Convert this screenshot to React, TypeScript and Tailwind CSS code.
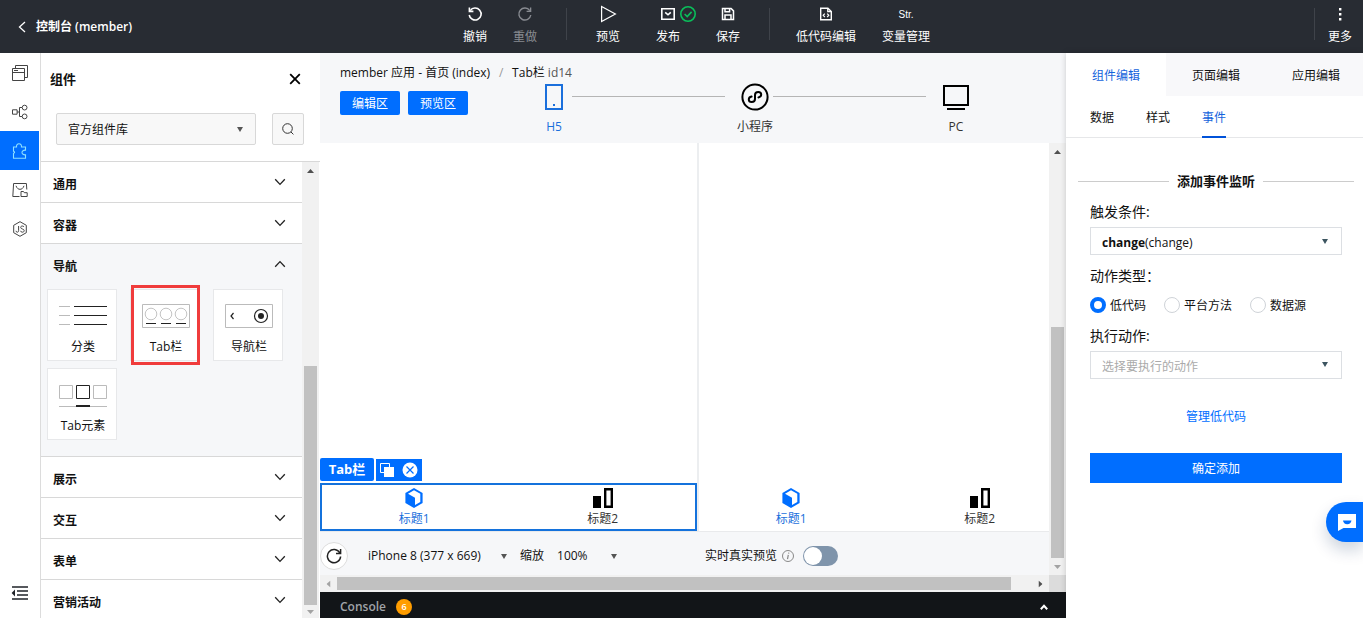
import React, { useState } from 'react';

type IconProps = { className?: string };

const UndoIcon = () => (
  <svg width="16" height="16" viewBox="0 0 16 16" fill="none" stroke="currentColor" strokeWidth="1.6">
    <path d="M3.2 4.6A6 6 0 1 1 2.2 9" />
    <path d="M2.4 1.4v4h4" />
  </svg>
);

const RedoIcon = () => (
  <svg width="16" height="16" viewBox="0 0 16 16" fill="none" stroke="currentColor" strokeWidth="1.4">
    <path d="M12.8 4.6A6 6 0 1 0 13.8 9" />
    <path d="M13.6 1.4v4h-4" />
  </svg>
);

const PlayIcon = () => (
  <svg width="18" height="18" viewBox="0 0 18 18" fill="none" stroke="currentColor" strokeWidth="1.2">
    <path d="M2.6 1.4v15.2L16.4 9z" />
  </svg>
);

const PublishIcon = () => (
  <svg width="16" height="16" viewBox="0 0 16 16" fill="none" stroke="currentColor" strokeWidth="1.6">
    <path d="M1.8 2.8h12.4v10.4H1.8z" />
    <path d="M5.2 6.4 8 8.8l2.8-2.4" />
  </svg>
);

const CheckBadge = () => (
  <svg width="16" height="16" viewBox="0 0 16 16" fill="none" stroke="#0abf5b" strokeWidth="1.6">
    <circle cx="8" cy="8" r="7.2" />
    <path d="m4.6 8 2.6 2.5 4.4-4.6" />
  </svg>
);

const SaveIcon = () => (
  <svg width="14" height="14" viewBox="0 0 14 14" fill="none" stroke="currentColor" strokeWidth="1.5">
    <path d="M1.5 1.5h8.6l2.4 2.4v8.6h-11z" />
    <path d="M4 1.8v3h4.6v-3M4 12.4V8h6v4.4" />
  </svg>
);

const CodeFileIcon = () => (
  <svg width="14" height="14" viewBox="0 0 14 14" fill="none" stroke="currentColor" strokeWidth="1.4">
    <path d="M1.7 1.2h7.2l3.4 3.4v8.2H1.7z" />
    <path d="M8.8 1.4v3.2h3.4" />
    <path d="M5.8 6.6 4.2 8.3l1.6 1.7M8.2 6.6l1.6 1.7L8.2 10" strokeWidth="1.2" />
  </svg>
);

const DotsIcon = () => (
  <svg width="14" height="14" viewBox="0 0 14 14" fill="currentColor">
    <path d="M6 1h2.4v2.4H6zM6 6h2.4v2.4H6zM6 11h2.4v2.4H6z" />
  </svg>
);

const PagesIcon = () => (
  <svg width="16" height="16" viewBox="0 0 16 16" fill="none" stroke="currentColor" strokeWidth="1">
    <path d="M.5 3.5h12v12H.5zM.5 7.5h12" />
    <path d="M2 5.5h4" />
    <path d="M3.5 3.5v-3h12v12h-3" />
  </svg>
);

const FlowIcon = () => (
  <svg width="16" height="16" viewBox="0 0 16 16" fill="none" stroke="currentColor" strokeWidth="1">
    <path d="M.5 5.8h4.6v4.4H.5zM5 8h2.5M10 3.5H7.5v9H10" />
    <circle cx="12.6" cy="3.6" r="2.4" />
    <circle cx="12.6" cy="12.4" r="2.4" />
  </svg>
);

const PuzzleIcon = () => (
  <svg width="16" height="16" viewBox="0 0 16 16" fill="none" stroke="currentColor" strokeWidth="1.1">
    <path d="M1.500 4h3c-.2-2 .9-3.200 2.500-3.200S9.700 2 9.500 4h4v3.200c-2-.2-3.500.7-3.500 2.300s1.500 2.500 3.500 2.300v3.400h-12v-5c1.400 0 1.400-2 0-2z" />
  </svg>
);

const BagIcon = () => (
  <svg width="16" height="16" viewBox="0 0 16 16" fill="none" stroke="currentColor" strokeWidth="1">
    <path d="M7.5 14.500H.8L1.600 1.500h12.800l.4 6" />
    <path d="M4 3.800C5 6.600 6.500 7.300 8 7.300s3-.7 4-3.500" />
    <path d="M9 9.500h2.500l.8 1.200h2.900v3.800H9z" />
  </svg>
);

const JsIcon = () => (
  <svg width="16" height="16" viewBox="0 0 16 16" fill="none" stroke="currentColor" strokeWidth="1">
    <path d="m8 .7 6.300 3.600v7.400L8 15.300l-6.300-3.600V4.300z" />
    <path d="M6.600 5v4.600c0 1.200-.6 1.600-1.300 1.600s-1.300-.5-1.300-1.400M12 6c-.3-.7-1-1-1.700-1-1 0-1.600.6-1.600 1.400 0 2 3.500 1.200 3.500 3.200 0 1-.8 1.600-1.800 1.600s-1.700-.5-1.900-1.400" />
  </svg>
);

const CollapseIcon = () => (
  <svg width="18" height="16" viewBox="0 0 18 16" fill="none" stroke="#1f2329" strokeWidth="1.5">
    <path d="M1 2h16M6 6h11M6 10h11M1 14h16" />
    <path d="M4 4.600v6.800L.6 8z" fill="#1f2329" stroke="none" />
  </svg>
);

const CloseIcon = () => (
  <svg width="12" height="12" viewBox="0 0 12 12" stroke="#000" strokeWidth="1.8">
    <path d="m1.200 1.200 9.600 9.600M10.800 1.200l-9.600 9.600" />
  </svg>
);

const SearchIcon = () => (
  <svg width="12" height="12" viewBox="0 0 12 12" fill="none" stroke="#333" strokeWidth="1">
    <circle cx="5.500" cy="5.500" r="4.800" />
    <path d="m9 9 2.400 2.400" />
  </svg>
);

const Chevron = ({ className }: IconProps) => (
  <svg className={className} width="12" height="8" viewBox="0 0 12 8" fill="none" stroke="#222" strokeWidth="1.3">
    <path d="m1.200 1.200 4.800 5.200 4.800-5.200" />
  </svg>
);

const Caret = ({ className }: IconProps) => (
  <svg className={className} width="6" height="5" viewBox="0 0 6 5" fill="currentColor">
    <path d="M0 0h6L3 5z" />
  </svg>
);

const ScrollArrow = ({ className }: IconProps) => (
  <svg className={className} width="7" height="4" viewBox="0 0 7 4" fill="currentColor">
    <path d="M0 4h7L3.500 0z" />
  </svg>
);

const CategoryArt = () => (
  <svg width="48" height="24" viewBox="0 0 48 24">
    <path d="M0 2.500h11M0 11.500h11M0 20.500h11" stroke="#bbb" />
    <path d="M15 2.500h33M15 11.500h33M15 20.500h33" stroke="#222" />
  </svg>
);

const TabBarArt = () => (
  <svg width="48" height="24" viewBox="0 0 48 24" fill="none">
    <path d="M.5.500h47v23H.5z" stroke="#bbb" />
    <g stroke="#c4c4c4">
      <circle cx="9" cy="10" r="5.800" />
      <circle cx="24" cy="10" r="5.800" />
      <circle cx="39" cy="10" r="5.800" />
    </g>
    <path d="M4 19.500h10M19 19.500h10M34 19.500h10" stroke="#222" />
  </svg>
);

const NavBarArt = () => (
  <svg width="48" height="24" viewBox="0 0 48 24" fill="none">
    <path d="M.5.500h47v23H.5z" stroke="#bbb" />
    <path d="M8.500 9 6 12l2.500 3" stroke="#222" strokeWidth="1.2" />
    <circle cx="36" cy="12" r="6.500" stroke="#222" strokeWidth="1.2" />
    <circle cx="36" cy="12" r="3" fill="#222" />
  </svg>
);

const TabItemArt = () => (
  <svg width="48" height="24" viewBox="0 0 48 24" fill="none">
    <path d="M.5 2.500h13v13H.5zM34.500 2.500h13v13h-13z" stroke="#bbb" />
    <path d="M17.500 2.500h13v13h-13z" stroke="#222" />
    <path d="M0 23.500h48" stroke="#bbb" />
    <path d="M17 23h14" stroke="#222" strokeWidth="2" />
  </svg>
);

const PhoneIcon = () => (
  <svg width="18" height="26" viewBox="0 0 18 26" fill="none" stroke="#1a6fdc" strokeWidth="2">
    <path d="M1 1h16v24H1z" />
    <path d="M8 21h2" />
  </svg>
);

const MiniProgramIcon = () => (
  <svg width="28" height="28" viewBox="0 0 28 28" fill="none" stroke="#000" strokeWidth="2" strokeLinecap="round">
    <circle cx="14" cy="14" r="12.600" />
    <path d="M10.600 13.600c-1.800.4-2.800 1.500-2.800 2.900 0 1.600 1.300 2.600 2.900 2.600 1.900 0 3.300-1.300 3.300-3v-4.200c0-1.700 1.400-3 3.300-3 1.600 0 2.900 1 2.900 2.600 0 1.400-1 2.500-2.800 2.900" />
  </svg>
);

const DesktopIcon = () => (
  <svg width="26" height="26" viewBox="0 0 26 26" fill="none" stroke="#000" strokeWidth="2">
    <path d="M1 2h24v19H1zM4 25h18" />
  </svg>
);

const CubeIcon = () => (
  <svg width="20" height="20" viewBox="0 0 20 20">
    <path d="M10 0l8.600 4.900v10.200L10 20l-8.600-4.900V4.900z" fill="#006eff" />
    <path d="M10 2.300l6.300 3.500v8.300L11 17.100V9.800L4 5.700z" fill="#fff" />
  </svg>
);

const ChartIcon = () => (
  <svg width="20" height="20" viewBox="0 0 20 20">
    <path d="M0 8h8v12H0z" fill="#000" />
    <path d="M12.200 1.200h6.600v17.600h-6.600z" fill="none" stroke="#000" strokeWidth="2.4" />
  </svg>
);

const CopyIcon = () => (
  <svg width="14" height="14" viewBox="0 0 14 14">
    <path d="M.5.500h9v9h-9z" fill="none" stroke="#fff" />
    <path d="M4 4h10v10H4z" fill="#fff" />
  </svg>
);

const RemoveIcon = () => (
  <svg width="16" height="16" viewBox="0 0 16 16">
    <circle cx="8" cy="8" r="7.500" fill="#fff" />
    <path d="m4.500 4.500 7 7M11.500 4.500l-7 7" stroke="#006eff" strokeWidth="1.2" />
  </svg>
);

const RefreshIcon = () => (
  <svg width="16" height="16" viewBox="0 0 16 16" fill="none" stroke="#222" strokeWidth="1.5">
    <path d="M13.800 5A6.600 6.600 0 1 0 14.600 8.500" />
    <path d="M14.600 1v4.600H10" />
  </svg>
);

const InfoIcon = () => (
  <svg width="12" height="12" viewBox="0 0 12 12" fill="none" stroke="#888">
    <circle cx="6" cy="6" r="5.500" />
    <path d="M6.800 2.600 6.600 3.700M6.300 4.900 5.500 9.200" strokeWidth="1.2" />
  </svg>
);

const ChatIcon = () => (
  <svg width="18" height="17" viewBox="0 0 18 17">
    <path d="M0 0h18v14H5.500L0 17z" fill="#fff" />
    <path d="M5 6.500h8.500a4.300 4.300 0 0 1-8.500 0z" fill="#006eff" />
  </svg>
);

const RAIL = [
  { id: 'pages', label: '页面', Icon: PagesIcon },
  { id: 'flow', label: '流程', Icon: FlowIcon },
  { id: 'components', label: '组件', Icon: PuzzleIcon },
  { id: 'assets', label: '素材', Icon: BagIcon },
  { id: 'script', label: '脚本', Icon: JsIcon }
];

const NAV_CARDS = [
  { label: '分类', Art: CategoryArt },
  { label: 'Tab栏', Art: TabBarArt, marked: true },
  { label: '导航栏', Art: NavBarArt },
  { label: 'Tab元素', Art: TabItemArt }
];

const GROUPS = ['通用', '容器', '导航', '展示', '交互', '表单', '营销活动'];

const ACTION_TYPES = ['低代码', '平台方法', '数据源'];

interface ToolProps {
  label: string;
  className?: string;
  children: React.ReactNode;
}

const Tool = ({ label, className = 'w-[60px]', children }: ToolProps) => (
  <button className={`flex flex-col items-center gap-[5px] ${className}`}>
    <span className="relative flex h-5 items-center justify-center">{children}</span>
    <span className="leading-4 whitespace-nowrap">{label}</span>
  </button>
);

const TopBar = () => (
  <header className="flex h-[53px] shrink-0 items-center bg-[#282c33] text-xs text-white">
    <a href="#console" className="flex w-[450px] items-center gap-2 pl-4 font-semibold">
      <svg width="12" height="12" viewBox="0 0 12 12" fill="none" stroke="currentColor" strokeWidth="1.3">
        <path d="M9 1 3.500 6 9 11" />
      </svg>
      控制台 (member)
    </a>
    <div className="flex h-full items-start pt-1">
      <Tool label="撤销" className="w-[50px]"><UndoIcon /></Tool>
      <Tool label="重做" className="w-[50px] text-[#888b91]"><RedoIcon /></Tool>
      <div className="mt-1 mr-[11px] ml-4 h-8 w-px bg-[#3f434a]" />
      <Tool label="预览"><PlayIcon /></Tool>
      <Tool label="发布">
        <PublishIcon />
        <span className="absolute left-5"><CheckBadge /></span>
      </Tool>
      <Tool label="保存"><SaveIcon /></Tool>
      <div className="mt-1 mr-4 ml-[11px] h-8 w-px bg-[#3f434a]" />
      <Tool label="低代码编辑" className="w-20"><CodeFileIcon /></Tool>
      <Tool label="变量管理" className="w-20">
        <span className="pt-[2px] font-['Liberation_Sans',sans-serif] text-[10px]">Str.</span>
      </Tool>
    </div>
    <div className="ml-auto flex h-full items-start pt-1">
      <div className="mt-1 h-8 w-px bg-[#3f434a]" />
      <Tool label="更多" className="w-12 pl-[2px]"><DotsIcon /></Tool>
    </div>
  </header>
);

const ComponentPanel = () => {
  const [open, setOpen] = useState('导航');

  return (
    <aside className="flex w-[280px] shrink-0 flex-col border-l border-[#dcdcdc] bg-white">
      <div className="flex items-center justify-between pt-4 pr-[19px] pl-[9px]">
        <h2 className="text-[13px] leading-5 font-semibold">组件</h2>
        <button aria-label="关闭"><CloseIcon /></button>
      </div>
      <div className="mt-6 mb-4 flex gap-4 pl-[15px]">
        <div className="relative w-[200px]">
          <select aria-label="组件库" className="h-8 w-full appearance-none rounded-xs border border-[#d8d8d8] bg-[#f8f8f8] px-[11px] pt-[2px] text-xs">
            <option>官方组件库</option>
          </select>
          <Caret className="pointer-events-none absolute top-[14px] right-[13px] text-[#555]" />
        </div>
        <button aria-label="搜索" className="flex h-8 w-8 items-center justify-center rounded-xs border border-[#d8d8d8] bg-[#f8f8f8]">
          <SearchIcon />
        </button>
      </div>
      <div className="flex min-h-0 flex-1 border-t border-[#d8d8d8]">
        <div className="min-w-0 flex-1 overflow-hidden">
          {GROUPS.map(group => (
            <section key={group} className={`border-b border-[#d8d8d8] ${open === group ? 'bg-[#f6f7f9]' : ''}`}>
              <button
                onClick={() => setOpen(open === group ? '' : group)}
                aria-expanded={open === group}
                className="flex h-10 w-full items-center justify-between pr-4 pl-3 text-xs font-semibold"
              >
                <span className="pt-[6px]">{group}</span>
                <Chevron className={open === group ? 'rotate-180' : ''} />
              </button>
              {open === group && (
                <div className="grid grid-cols-3 gap-x-[13px] gap-y-[7px] pt-[5px] pr-[19px] pb-4 pl-[6px]">
                  {NAV_CARDS.map(({ label, Art, marked }) => (
                    <button
                      key={label}
                      className="relative flex h-[72px] flex-col items-center border border-[#e7e8ea] bg-white pt-[14px] pl-[2px] text-xs"
                    >
                      <Art />
                      <span className="mt-[11px] leading-4">{label}</span>
                      {marked && <span className="absolute -inset-y-[5px] -right-px left-0 border-3 border-[#f03c3c]" />}
                    </button>
                  ))}
                </div>
              )}
            </section>
          ))}
        </div>
        <div className="mr-px flex w-[17px] flex-col items-center bg-[#f1f1f1]">
          <span className="flex h-[17px] items-center text-[#505050]"><ScrollArrow /></span>
          <div className="flex w-full flex-1 flex-col justify-end px-[2px]">
            <div className="h-[56%] bg-[#c1c1c1]" />
          </div>
          <span className="flex h-[13px] items-center text-[#a3a3a3]"><ScrollArrow className="rotate-180" /></span>
        </div>
      </div>
    </aside>
  );
};

const DeviceTabs = () => (
  <div className="ml-[68px] flex flex-1 items-start text-xs text-[#333]">
    <button className="flex w-9 flex-col items-center text-[#1a6fdc]">
      <span className="flex h-7 items-center"><PhoneIcon /></span>
      <span className="mt-2 leading-4">H5</span>
    </button>
    <div className="mt-[13px] mr-3 h-px flex-1 bg-[#b5b5b5]" />
    <button className="flex w-9 flex-col items-center">
      <span className="flex h-7 items-center"><MiniProgramIcon /></span>
      <span className="mt-2 leading-4">小程序</span>
    </button>
    <div className="mt-[13px] mr-3 h-px flex-1 bg-[#b5b5b5]" />
    <button className="flex w-9 flex-col items-center">
      <span className="flex h-7 items-center"><DesktopIcon /></span>
      <span className="mt-2 leading-4">PC</span>
    </button>
  </div>
);

const PhoneTabBar = ({ selected = false }: { selected?: boolean }) => (
  <nav className={`flex h-12 w-[377px] text-xs ${selected ? 'outline-2 -outline-offset-2 outline-[#1472dc]' : ''}`}>
    <a href="#tab1" className="flex flex-1 flex-col items-center pt-[5px] text-[#1a6fdc]">
      <CubeIcon />
      <span className="mt-[3px] leading-4">标题1</span>
    </a>
    <a href="#tab2" className="flex flex-1 flex-col items-center pt-[5px] text-[#333]">
      <ChartIcon />
      <span className="mt-[3px] leading-4">标题2</span>
    </a>
  </nav>
);

const Workspace = () => {
  const [live, setLive] = useState(false);

  return (
    <main className="flex min-w-0 flex-1 flex-col bg-[#f6f7f9]">
      <div className="h-[90px] shrink-0 pt-3 pr-[92px] pl-5">
        <nav aria-label="路径" className="flex text-xs leading-4">
          <a href="#page">member 应用 - 首页 (index)</a>
          <span className="mx-1 w-[14px] text-center text-[#999]">/</span>
          <a href="#node">Tab栏 <span className="text-[#555]">id14</span></a>
        </nav>
        <div className="mt-[2px] flex">
          <div className="mt-2 flex gap-2 text-xs text-white">
            <button className="h-6 w-[60px] rounded-xs bg-[#006eff] pt-[2px]">编辑区</button>
            <button className="h-6 w-[60px] rounded-xs bg-[#006eff] pt-[2px]">预览区</button>
          </div>
          <DeviceTabs />
        </div>
      </div>

      <div className="flex min-h-0 flex-1">
        <div className="flex min-w-0 flex-1 flex-col">
          <div className="flex flex-1 overflow-hidden">
            <div className="flex w-[377px] shrink-0 flex-col justify-end bg-white">
              <div className="mb-[2px] flex items-end gap-[2px]">
                <span className="flex h-[23px] w-[54px] items-center justify-center rounded-xs bg-[#006eff] text-[13px] font-bold text-white">Tab栏</span>
                <span className="flex h-[22px] w-[46px] items-center justify-center gap-2 bg-[#006eff]">
                  <button aria-label="复制"><CopyIcon /></button>
                  <button aria-label="删除"><RemoveIcon /></button>
                </span>
              </div>
              <PhoneTabBar selected />
            </div>
            <div className="flex w-[377px] shrink-0 flex-col justify-end bg-white shadow-[inset_2px_0_0_#eceef0]">
              <PhoneTabBar />
            </div>
          </div>
          <div className="flex h-11 shrink-0 items-center border-t border-[#e9eaec] pt-1 text-xs">
            <button aria-label="刷新" className="flex h-7 w-7 items-center justify-center rounded-full border border-[#ddd] bg-white">
              <RefreshIcon />
            </button>
            <div className="relative ml-5 w-[139px]">
              <select aria-label="设备" className="w-full appearance-none bg-transparent">
                <option>iPhone 8 (377 x 669)</option>
              </select>
              <Caret className="pointer-events-none absolute top-[6px] right-0 text-[#555]" />
            </div>
            <label htmlFor="zoom" className="ml-[13px]">缩放</label>
            <div className="relative ml-[13px] w-[60px]">
              <select id="zoom" className="w-full appearance-none bg-transparent">
                <option>100%</option>
              </select>
              <Caret className="pointer-events-none absolute top-[6px] right-0 text-[#555]" />
            </div>
            <label className="ml-[88px] flex items-center">
              实时真实预览
              <span className="mr-[9px] ml-[5px]"><InfoIcon /></span>
              <input type="checkbox" checked={live} onChange={() => setLive(!live)} className="peer sr-only" />
              <span className="flex h-5 w-[35px] items-center rounded-full bg-[#7f94ab] px-px peer-checked:justify-end peer-checked:bg-[#006eff]">
                <span className="h-[18px] w-[18px] rounded-full bg-white" />
              </span>
            </label>
          </div>
        </div>
        <div className="flex w-[17px] flex-col items-center bg-[#f1f1f1]">
          <span className="flex h-[17px] items-center text-[#505050]"><ScrollArrow /></span>
          <div className="flex w-full flex-1 flex-col justify-end px-[2px]">
            <div className="h-[58%] bg-[#c1c1c1]" />
          </div>
          <span className="flex h-[17px] items-center text-[#a3a3a3]"><ScrollArrow className="rotate-180" /></span>
        </div>
      </div>

      <div className="flex h-[17px] shrink-0 items-center bg-[#f1f1f1]">
        <span className="flex w-[17px] justify-center text-[#a3a3a3]"><ScrollArrow className="-rotate-90" /></span>
        <div className="h-full flex-1 py-[2px]">
          <div className="h-full w-[97%] bg-[#c1c1c1]" />
        </div>
        <span className="flex w-[17px] justify-center text-[#505050]"><ScrollArrow className="rotate-90" /></span>
        <span className="h-full w-[17px] bg-[#dcdcdc]" />
      </div>

      <button className="flex h-[26px] shrink-0 items-center bg-[#121518] pt-1 pr-[18px] pl-5 text-xs font-semibold text-[#a0a4a9]">
        Console
        <span className="ml-[10px] flex h-4 w-4 items-center justify-center rounded-full bg-[#ff9d00] text-[9px] text-white">6</span>
        <svg className="ml-auto" width="8" height="6" viewBox="0 0 8 6" fill="none" stroke="#fff" strokeWidth="2">
          <path d="m.8 5.200 3.200-3.400 3.200 3.400" />
        </svg>
      </button>
    </main>
  );
};

const EventPanel = () => {
  const [actionType, setActionType] = useState('低代码');

  return (
    <aside className="relative z-10 w-[297px] shrink-0 bg-white text-xs shadow-[0_0_6px_rgba(0,0,0,0.18)]">
      <div className="flex h-[43px] bg-[#f8f8fa]">
        <button className="w-[100px] shrink-0 bg-white pt-[2px] text-[#1463dc]">组件编辑</button>
        <button className="w-[100px] shrink-0 pt-[2px]">页面编辑</button>
        <button className="flex-1 pt-[2px] pl-[3px]">应用编辑</button>
      </div>
      <div className="flex h-[42px] gap-8 border-b border-[#e6e7e9] px-6">
        <button className="pt-[2px]">数据</button>
        <button className="pt-[2px]">样式</button>
        <button className="-mb-px border-b-2 border-[#0052d9] pt-[3px] text-[#1463dc]">事件</button>
      </div>

      <div className="mt-8 flex items-center gap-2 pr-[9px] pl-3">
        <span className="h-px flex-1 bg-[#ccc]" />
        <h3 className="text-[13px] leading-[22px] font-semibold">添加事件监听</h3>
        <span className="h-px flex-1 bg-[#ccc]" />
      </div>

      <form className="flex flex-col pr-[21px] pl-6" onSubmit={e => e.preventDefault()}>
        <label htmlFor="trigger" className="mt-[10px] text-sm leading-5">触发条件:</label>
        <div className="relative mt-[5px] flex h-7 items-center justify-between border border-[#dcdfe3] pr-[13px] pl-[11px]">
          <span aria-hidden="true" className="pt-[3px]"><b>change</b>(change)</span>
          <Caret className="text-[#3c5560]" />
          <select id="trigger" className="absolute inset-0 w-full opacity-0">
            <option>change(change)</option>
          </select>
        </div>

        <fieldset className="mt-[11px]">
          <legend className="text-sm leading-5">动作类型：</legend>
          <div className="mt-2 flex gap-[18px]">
            {ACTION_TYPES.map(type => (
              <label key={type} className="flex items-center gap-1 leading-5">
                <input
                  type="radio"
                  name="actionType"
                  checked={actionType === type}
                  onChange={() => setActionType(type)}
                  className="h-4 w-4 appearance-none rounded-full border border-[#cfd3d8] bg-white checked:border-4 checked:border-[#006eff]"
                />
                <span className="pt-[2px]">{type}</span>
              </label>
            ))}
          </div>
        </fieldset>

        <label htmlFor="action" className="mt-[10px] text-sm leading-5">执行动作:</label>
        <div className="relative mt-[5px]">
          <select id="action" className="h-7 w-full appearance-none border border-[#dcdfe3] bg-white px-[11px] pt-[3px] text-[#aaa]">
            <option>选择要执行的动作</option>
          </select>
          <Caret className="pointer-events-none absolute top-[11px] right-[14px] text-[#3c5560]" />
        </div>

        <a href="#lowcode" className="mt-7 self-center leading-5 text-[#006eff]">管理低代码</a>
        <button className="mt-[26px] h-[30px] bg-[#006eff] pt-[2px] text-white">确定添加</button>
      </form>

      <button
        aria-label="在线客服"
        className="absolute right-0 bottom-[76px] flex h-10 w-[37px] items-center rounded-l-full bg-[#006eff] pl-3 shadow-[0_8px_16px_rgba(0,40,90,0.2)]"
      >
        <ChatIcon />
      </button>
    </aside>
  );
};

const App: React.FC = () => {
  const [active, setActive] = useState('components');

  return (
    <div className="flex h-screen flex-col overflow-hidden bg-white font-['Open_Sans','Noto_Sans_CJK_SC',sans-serif] text-[#111]">
      <TopBar />
      <div className="flex min-h-0 flex-1">
        <nav aria-label="工具栏" className="flex w-10 shrink-0 flex-col bg-white text-[#444]">
          {RAIL.map(({ id, label, Icon }) => (
            <button
              key={id}
              aria-label={label}
              onClick={() => setActive(id)}
              className={`flex h-[39px] w-[39px] items-center justify-center ${active === id ? 'bg-[#006eff] text-[#8fe0ff]' : ''}`}
            >
              <Icon />
            </button>
          ))}
          <button aria-label="收起" className="mt-auto mb-[17px] flex w-[39px] justify-center"><CollapseIcon /></button>
        </nav>
        <ComponentPanel />
        <Workspace />
        <EventPanel />
      </div>
    </div>
  );
};

export default App;
